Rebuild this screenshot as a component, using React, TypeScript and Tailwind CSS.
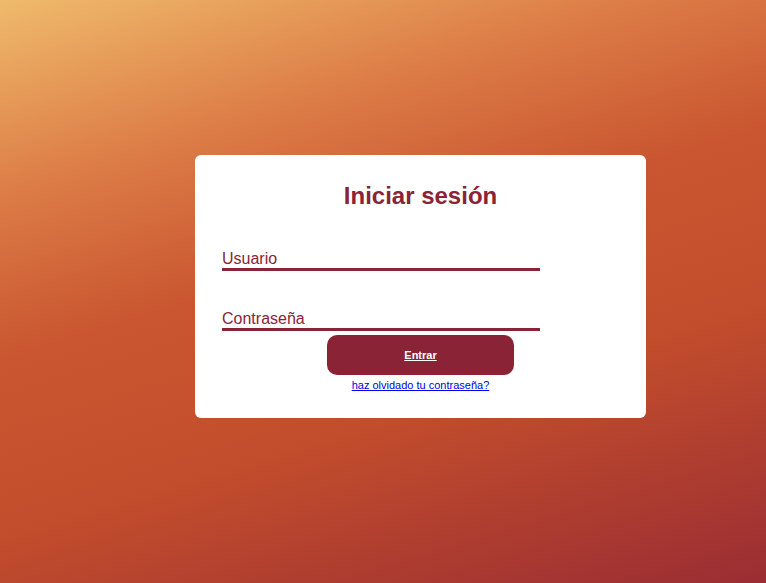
import React from "react";

export default function App() {
  return (
    <div
      className="min-h-[583px] w-full pt-[155px] pl-[195px] bg-[linear-gradient(163deg,#efba6b_0%,#dc7c46_24%,#c95630_44%,#c24d2c_66%,#9b2d33_100%)]"
      style={{ fontFamily: '"Liberation Sans", Arial, sans-serif' }}
    >
      <div className="w-[451px] h-[263px] bg-white rounded-[6px] pt-[27px]">
        <h2 className="text-center text-[24px] leading-[28px] font-bold text-[#8b2336]">
          Iniciar sesión
        </h2>
        <form className="flex flex-col" onSubmit={(e) => e.preventDefault()}>
          <div className="pl-[27px] mt-[39px]">
            <input
              type="text"
              placeholder="Usuario"
              className="block w-[318px] h-[22px] p-0 bg-transparent border-0 border-b-[3px] border-solid border-[#8b2336] text-[16px] text-[#8b2336] placeholder:text-[#8b2336] outline-none"
            />
          </div>
          <div className="pl-[27px] mt-[38px]">
            <input
              type="password"
              placeholder="Contraseña"
              className="block w-[318px] h-[22px] p-0 bg-transparent border-0 border-b-[3px] border-solid border-[#8b2336] text-[16px] text-[#8b2336] placeholder:text-[#8b2336] outline-none"
            />
          </div>
          <div className="flex justify-center mt-[4px]">
            <button
              type="submit"
              className="w-[187px] h-[40px] rounded-[10px] bg-[#8b2336] text-white text-[11px] font-bold underline"
            >
              Entrar
            </button>
          </div>
          <div className="text-center mt-[4px] text-[11px] leading-[13px]">
            <a href="#" className="text-[#0000ee] underline">
              haz olvidado tu contraseña?
            </a>
          </div>
        </form>
      </div>
    </div>
  );
}
